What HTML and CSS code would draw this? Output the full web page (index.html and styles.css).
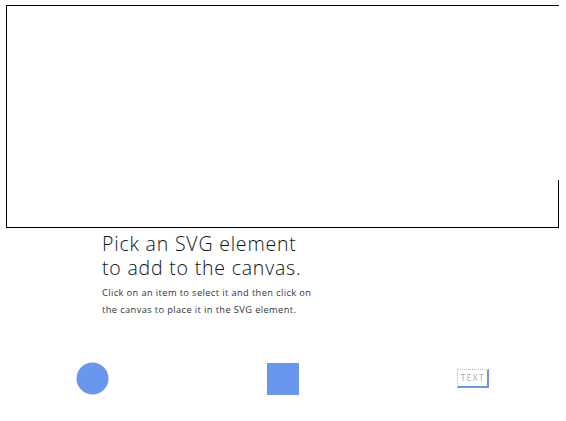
FILE: index.html
```html
<!DOCTYPE html>
<html>
<head>
<meta charset="utf-8">
<link rel="stylesheet" href="styles.css">
</head>
<body>
<div class="canvas"></div>
<div class="intro">
  <h1 class="title">Pick an SVG element<br>to add to the canvas.</h1>
  <p class="desc">Click on an item to select it and then click on<br>the canvas to place it in the SVG element.</p>
</div>
<div class="palette">
  <div class="slot"><svg class="circle" width="33" height="33" viewBox="0 0 33 33"><circle cx="16.5" cy="16.5" r="16" fill="#6997ee"/></svg></div>
  <div class="slot"><div class="square"></div></div>
  <div class="slot"><div class="textel">TEXT</div></div>
</div>
</body>
</html>
```
FILE: styles.css
```css
html, body {
  margin: 0;
  padding: 0;
  background: #fff;
}
body {
  width: 566px;
  font-family: "Open Sans", "Lato", sans-serif;
  color: #222;
}
.canvas {
  position: relative;
  box-sizing: border-box;
  margin: 5px 0 0 6px;
  width: 553px;
  height: 223px;
  border: 1px solid #000;
  border-right: none;
}
.canvas::after {
  content: "";
  position: absolute;
  right: 0;
  top: 174px;
  bottom: 0;
  width: 1px;
  background: #000;
}
.intro {
  padding-left: 102px;
  margin-top: 4px;
}
.title {
  margin: 0;
  font-size: 19.5px;
  font-weight: 300;
  line-height: 24px;
  color: #111;
  letter-spacing: 0.8px;
}
.desc {
  margin: 4px 0 0;
  font-size: 9.3px;
  font-weight: 400;
  line-height: 17px;
  color: #333;
  letter-spacing: 0.38px;
}
.palette {
  display: flex;
  margin-top: 44px;
}
.slot {
  flex: 1;
  display: flex;
  justify-content: center;
  align-items: center;
  height: 33px;
}
.circle {
  margin-right: 4px;
}
.square {
  width: 32px;
  height: 32px;
  background: #6997ee;
}
.textel {
  box-sizing: border-box;
  width: 32px;
  height: 19px;
  margin-left: 3px;
  border-top: 1px dotted #bbb;
  border-left: 1px dotted #bbb;
  border-right: 2px solid #6997ee;
  border-bottom: 2px solid #6997ee;
  font-size: 9px;
  line-height: 16px;
  text-align: center;
  color: #aab;
  letter-spacing: 1px;
}
```
